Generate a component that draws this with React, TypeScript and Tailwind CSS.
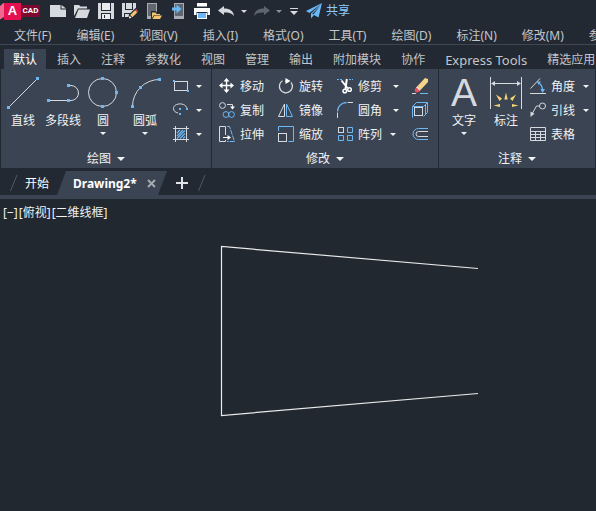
import type { ReactNode } from "react";

const LIGHT = "#d6d9dd";
const BLUE = "#6cb8f6";

function Caret({ large = false, className = "" }: { large?: boolean; className?: string }) {
  return (
    <svg viewBox="0 0 8 4" className={`${large ? "h-1 w-2" : "h-[3px] w-[6px]"} shrink-0 ${className}`} aria-hidden="true">
      <path d="M0 0h8L4 4z" fill="currentColor" />
    </svg>
  );
}

function Dot({ x, y, size = 3 }: { x: number; y: number; size?: number }) {
  return <rect x={x - size / 2} y={y - size / 2} width={size} height={size} fill={BLUE} stroke="none" />;
}

function Icon({ big = false, children }: { big?: boolean; children: ReactNode }) {
  return (
    <svg
      viewBox={big ? "0 0 32 32" : "0 0 16 16"}
      className={big ? "size-8 shrink-0" : "size-4 shrink-0"}
      fill="none"
      stroke={LIGHT}
      aria-hidden="true"
    >
      {children}
    </svg>
  );
}

const icons = {
  line: (
    <Icon big>
      <path d="M3 29 29 3" />
      <Dot x={1.5} y={30.5} />
      <Dot x={30.5} y={1.5} />
    </Icon>
  ),
  polyline: (
    <Icon big>
      <path d="M3 23.5h18M22 8.5h2a7.5 7.5 0 0 1 0 15h-2" />
      <Dot x={1.5} y={23.5} />
      <Dot x={21.5} y={23.5} />
      <Dot x={21.5} y={8.5} />
    </Icon>
  ),
  circle: (
    <Icon big>
      <circle cx="15.5" cy="15.5" r="14" />
      <Dot x={15.5} y={1.5} />
      <Dot x={29.5} y={15.5} />
      <Dot x={15.5} y={29.5} />
    </Icon>
  ),
  arc: (
    <Icon big>
      <path d="M3.5 29.5A27 27 0 0 1 30.5 2.5" />
      <Dot x={3.5} y={29.5} />
      <Dot x={11.5} y={10.5} />
      <Dot x={30.5} y={2.5} />
    </Icon>
  ),
  rect: (
    <Icon>
      <rect x="1.5" y="3.5" width="13" height="9" />
      <Dot x={1} y={3} size={2} />
      <Dot x={15} y={13} size={2} />
    </Icon>
  ),
  ellipse: (
    <Icon>
      <path d="M14 7C13.500 0 0.500 0.500 0.500 6.500c0 2.500 2 4 4.500 4.500" />
      <Dot x={7} y={7} size={2} />
      <Dot x={14} y={7} size={2} />
      <Dot x={7} y={12} size={2} />
    </Icon>
  ),
  hatch: (
    <Icon>
      <path d="M2.500 0v16M13.500 0v16M0 2.500h16M0 13.500h16" />
      <path d="m4 7 3-3M4 10l6-6M4 12.500l8-8M7 12.500l5-5M10 12.500l2-2" stroke={BLUE} strokeWidth="1.200" />
    </Icon>
  ),
  move: (
    <Icon>
      <path d="M7.500 2v11M2 7.500h11" stroke="#fff" strokeWidth="1.400" />
      <path d="M7.500 0 10.500 3.500h-6zM7.500 15l3-3.500h-6zM0 7.500l3.500-3v6zM15 7.500l-3.500-3v6z" fill="#fff" stroke="none" />
    </Icon>
  ),
  rotate: (
    <Icon>
      <path d="M4.500 2.800a6.500 6.500 0 1 0 8.500 1.500" strokeWidth="1.300" />
      <path d="M7 3h2" stroke="#fff" />
      <path d="M7.500 0 12.500 3 7.500 6z" fill="#fff" stroke="none" />
    </Icon>
  ),
  copy: (
    <Icon>
      <circle cx="3.500" cy="3.500" r="2.900" />
      <path d="M8 2.500h5.500V5" />
      <path d="M11 4.500h5L13.500 7.500z" fill="#fff" stroke="none" />
      <circle cx="7" cy="12.500" r="2.900" stroke={BLUE} />
      <circle cx="12.500" cy="12.500" r="2.900" stroke={BLUE} />
    </Icon>
  ),
  mirror: (
    <Icon>
      <path d="M6.500 2v12.500h-6z" />
      <path d="M8.500 2v12.500h6z" stroke={BLUE} />
    </Icon>
  ),
  stretch: (
    <Icon>
      <path d="M6.500 9V.5h-6v15h6V14" />
      <path d="M8 .5h2.500L15.500 15.500H8" stroke={BLUE} strokeDasharray="5 1" />
      <path d="M4 11.500h6" stroke="#fff" />
      <path d="M8.500 9 12 11.500 8.500 14z" fill="#fff" stroke="none" />
    </Icon>
  ),
  scale: (
    <Icon>
      <path d="M.5 5V.5h15v15h-5" stroke={BLUE} />
      <rect x=".5" y="7.500" width="8" height="8" />
    </Icon>
  ),
  trim: (
    <Icon>
      <path d="M0 1.500h5M12 1.500h4" stroke={BLUE} strokeDasharray="2 1" />
      <path d="m4.500 2.500 6 7.500M9.800 1 8.500 11" stroke="#fff" strokeWidth="2" />
      <circle cx="7.800" cy="13" r="1.800" stroke="#fff" strokeWidth="1.500" />
      <circle cx="12.500" cy="11.500" r="1.800" stroke="#fff" strokeWidth="1.500" />
    </Icon>
  ),
  fillet: (
    <Icon>
      <path d="M.5 9.500a9 9 0 0 1 9-9" stroke={BLUE} strokeWidth="1.300" />
      <path d="M.5 10.500V16M10.500 .5H16" />
    </Icon>
  ),
  array: (
    <Icon>
      <rect x="1.500" y="1.500" width="5" height="5" />
      <path d="M10.500 1.500h5v5h-5zM1.500 9.500h5v5h-5zM10.500 9.500h5v5h-5z" stroke={BLUE} />
    </Icon>
  ),
  erase: (
    <Icon>
      <path d="M0 15.500h4" />
      <path d="M8 15.500h8" stroke={BLUE} />
      <path d="M13 0 16 1v3L8.500 12 5 8.500z" fill="#f6d488" stroke="none" />
      <path d="m5 8.500 3.500 3.500-1 1L4 9.500z" fill="#fff" stroke="none" />
      <path d="m4.500 9.500 3.200 3.200C7 14.500 4 15 3 13.500c-.8-1.500 0-3 1.500-4z" fill="#e8505b" stroke="none" />
    </Icon>
  ),
  solid: (
    <Icon>
      <path d="m.5 4.500 4-4h11v10l-4 4M11.500 4.500l4-4M.5 4.500v11M13.500 3v10M.5 4.500h11" stroke={BLUE} />
      <rect x="2.500" y="5.500" width="8" height="8" />
    </Icon>
  ),
  offset: (
    <Icon>
      <path d="M16 2.500H6.500a5.500 5.500 0 0 0 0 11H16" stroke={BLUE} />
      <path d="M16 5.500H6.500a2.500 2.500 0 0 0 0 5H16" />
    </Icon>
  ),
  dimension: (
    <Icon big>
      <path d="M.5 0v32M31.500 0v32M2 6.500h28" />
      <path d="M1 6.500 5 4v5zM31 6.500 27 4v5z" fill={LIGHT} stroke="none" />
      <path
        d="M16 15.500l1.700 7h-3.400zM6 17.500l6 4-2.500 2.500zM26 17.500l-6 4 2.500 2.500zM3.500 28.500l6.500-1.500v3zM28.500 28.500 22 27v3z"
        fill="#f8d373"
        stroke="none"
      />
    </Icon>
  ),
  angle: (
    <Icon>
      <path d="M0 15.500h16M.5 10.500 10 .5" />
      <path d="M8 4.500c3 1.500 4.500 4.500 4.500 8" stroke={BLUE} strokeWidth="1.300" />
      <path d="M7 3.500h4L8.500 7zM10.500 11h4.500l-2.500 4z" fill={BLUE} stroke="none" />
    </Icon>
  ),
  leader: (
    <Icon>
      <circle cx="12.500" cy="4" r="3" />
      <path d="M9.500 4H6.500L2 12" />
      <path d="M.5 15V9.500l4 2.300z" fill={LIGHT} stroke="none" />
    </Icon>
  ),
  table: (
    <Icon>
      <path d="M.5 1.500h15v13H.5zM0 5.500h16M0 8.500h16M0 11.500h16M5.500 5v10M10.500 5v10" />
    </Icon>
  ),
};

function BigTool({ label, icon, menu = false, className = "w-10" }: { label: string; icon: ReactNode; menu?: boolean; className?: string }) {
  return (
    <button type="button" className={`flex h-[72px] flex-col items-center pt-[3px] ${className}`}>
      {icon}
      <span className="mt-1">{label}</span>
      {menu && <Caret className="mt-[3px]" />}
    </button>
  );
}

function Tool({ label, icon, menu = false }: { label: string; icon: ReactNode; menu?: boolean }) {
  return (
    <button type="button" className="flex h-6 items-center">
      {icon}
      <span className="ml-[5px] pt-0.5">{label}</span>
      {menu && <Caret className="ml-2" />}
    </button>
  );
}

function IconTool({ label, icon, menu = false }: { label: string; icon: ReactNode; menu?: boolean }) {
  return (
    <button type="button" aria-label={label} className="flex h-6 items-center gap-[7px]">
      {icon}
      {menu && <Caret />}
    </button>
  );
}

function Panel({ title, className, children }: { title: string; className: string; children: ReactNode }) {
  return (
    <section aria-label={title} className={`h-[99px] shrink-0 bg-[#3b4453] pt-[5px] ${className}`}>
      <div className="flex">{children}</div>
      <button type="button" className="flex h-[22px] w-full items-center justify-center gap-[6px] pt-[3px]">
        {title}
        <Caret large />
      </button>
    </section>
  );
}

const menus = ["文件(F)", "编辑(E)", "视图(V)", "插入(I)", "格式(O)", "工具(T)", "绘图(D)", "标注(N)", "修改(M)", "参数(P)"];
const tabs = ["默认", "插入", "注释", "参数化", "视图", "管理", "输出", "附加模块", "协作", "Express Tools", "精选应用"];

const quickTools = [
  {
    label: "新建",
    art: <path d="M0 2h10.500v4.500H16V14H0zM11.500 2 16 5.500h-4.500z" fill={LIGHT} stroke="none" />,
  },
  {
    label: "打开",
    art: <path d="M0 13V2h5l1.500 1.500H13V5.500H4zM4.500 6.500H16L13 15H1z" fill={LIGHT} stroke="none" />,
  },
  {
    label: "保存",
    art: (
      <g stroke="none">
        <path d="M0 0h16v16H0z" fill={LIGHT} />
        <path d="M3 0h1v7h8V0h1v8H3zM3 10h10v6h-1v-5H4v5H3z" fill="#222933" />
        <path d="M4 0h8v7H4zM4 11h8v5H4z" fill="#e8eaec" />
        <path d="M6 12h1v3H6z" fill="#222933" />
      </g>
    ),
  },
  {
    label: "另存为",
    art: (
      <g stroke="none">
        <path d="M0 0h14v9l-5 5H0z" fill={LIGHT} />
        <path d="M3 0h1v6h6V0h1v7H3zM2 10h7v1H3v3H2z" fill="#222933" />
        <path d="m6 16 1-4.500L13.500 5 17 8.500 10.500 15z" fill="#222933" />
        <path d="M8.200 12 13 7.200l2.200 2.200-4.800 4.800z" fill="#f5c56d" />
        <path d="m13 7.200 1.200-1.200L16 8.200l-.8 1.200z" fill="#e8505b" />
        <path d="m7.500 12.800 2 2L7 15.500z" fill="#fff" />
      </g>
    ),
  },
  {
    label: "从移动设备打开",
    art: (
      <g stroke="none">
        <path d="M1 0h10v16H1z" fill="#a9adb3" />
        <path d="M2 1h8v12H2z" fill="#62676f" />
        <path d="M5 8h5l1 1.500h5.500V16H5z" fill="#222933" />
        <path d="M6 9.500h3.500l1 1.500H14v1H8l-2 3z" fill="#f5c56d" />
        <path d="M8.500 12.500H16L14 16H6.500z" fill="#f5c56d" />
      </g>
    ),
  },
  {
    label: "保存到移动设备",
    art: (
      <g stroke="none">
        <path d="M4 0h10v16H4z" fill="#a9adb3" />
        <path d="M5 1h8v12H5z" fill="#62676f" />
        <path d="M2 4.500h4.500v-3L11.500 6l-5 4.500v-3H2z" fill={BLUE} />
      </g>
    ),
  },
  {
    label: "打印",
    art: (
      <g stroke="none">
        <path d="M3 0h10v3.500H3zM0 5h16v7h-2.500V9h-11v3H0z" fill="#fff" />
        <path d="M4 10h8v5H4z" fill={BLUE} />
        <path d="M3 10h1v6H3zM12 10h1v6h-1zM3 15h10v1H3z" fill="#fff" />
      </g>
    ),
  },
];

function Undo({ className = "" }: { className?: string }) {
  return (
    <svg viewBox="0 0 16 10" className={`h-[10px] w-4 ${className}`} aria-hidden="true">
      <path d="M0 4.500 6 0v2.500c6 0 9.500 2.500 10 7.500-2.500-3-5-3.500-10-3.500V9z" fill="currentColor" />
    </svg>
  );
}

export default function App() {
  return (
    <div className="flex min-h-screen flex-col overflow-hidden bg-[#222933] font-['Noto_Sans','Noto_Sans_CJK_SC',sans-serif] text-xs leading-4 whitespace-nowrap text-[#f0f2f4]">
      <header className="flex h-[22px] items-center">
        <div className="flex w-10 shrink-0 items-center">
          <div className="h-[17px] w-1 bg-[#f0688f] [clip-path:polygon(0_20%,100%_0,100%_85%,0_100%)]" />
          <div className="flex h-[17px] w-[17px] items-center justify-center bg-[#e51050] font-['Liberation_Sans',sans-serif] text-[13px] font-bold text-white">A</div>
          <div className="flex h-3 w-[19px] items-center justify-center bg-[#7d0a2e] font-['Roboto',sans-serif] text-[8px] font-bold text-white">CAD</div>
        </div>
        <div className="ml-[10px] flex gap-2">
          {quickTools.map((tool) => (
            <button key={tool.label} type="button" aria-label={tool.label}>
              <Icon>{tool.art}</Icon>
            </button>
          ))}
        </div>
        <button type="button" aria-label="放弃" className="ml-2 text-[#d6d9dd]">
          <Undo />
        </button>
        <button type="button" aria-label="放弃列表" className="ml-[7px] text-[#d6d9dd]">
          <Caret />
        </button>
        <button type="button" aria-label="重做" className="ml-[7px] text-[#5f656e]">
          <Undo className="-scale-x-100" />
        </button>
        <button type="button" aria-label="重做列表" className="ml-[6px] text-[#8c9198]">
          <Caret />
        </button>
        <button type="button" aria-label="自定义快速访问工具栏" className="ml-2 flex flex-col gap-0.5 text-[#d6d9dd]">
          <span className="h-px w-2 bg-current" />
          <Caret large />
        </button>
        <button type="button" className="ml-2 flex items-center gap-1 text-[#8ccbff]">
          <Icon>
            <path d="M16 0 0 8l3.500 2zM16 0 5 10.500v5L8 12l4.500 2.500zM6 11l8-8-6.500 8.200z" fill={BLUE} stroke="none" />
          </Icon>
          共享
        </button>
      </header>

      <nav aria-label="菜单栏" className="flex h-[23px] gap-[25px] overflow-hidden border-b border-[#3f4753] pt-[6px] pl-[14px] text-[#c3c6ca]">
        {menus.map((menu) => (
          <button key={menu} type="button" className="h-4 shrink-0">
            {menu}
          </button>
        ))}
      </nav>

      <nav aria-label="功能区选项卡" className="flex gap-0.5 overflow-hidden pt-1 pl-1 text-[#c3c6ca]">
        {tabs.map((tab, i) => (
          <button
            key={tab}
            type="button"
            aria-current={i === 0 ? "page" : undefined}
            className={`h-5 shrink-0 px-[9px] pt-0.5 ${i === 0 ? "bg-[#3b4453] text-white" : ""} ${tab === "Express Tools" ? "text-[13px] leading-4" : ""}`}
          >
            {tab}
          </button>
        ))}
      </nav>

      <main className="flex flex-1 flex-col">
        <div className="flex gap-px overflow-hidden pl-px">
          <Panel title="绘图" className="w-[210px] px-0.5">
            <BigTool label="直线" icon={icons.line} />
            <BigTool label="多段线" icon={icons.polyline} />
            <BigTool label="圆" icon={icons.circle} menu />
            <BigTool label="圆弧" icon={icons.arc} menu className="w-11" />
            <div className="ml-[6px]">
              <IconTool label="矩形" icon={icons.rect} menu />
              <IconTool label="椭圆" icon={icons.ellipse} menu />
              <IconTool label="图案填充" icon={icons.hatch} menu />
            </div>
          </Panel>
          <Panel title="修改" className="w-[226px]">
            <div className="ml-[7px]">
              <Tool label="移动" icon={icons.move} />
              <Tool label="复制" icon={icons.copy} />
              <Tool label="拉伸" icon={icons.stretch} />
            </div>
            <div className="ml-[14px]">
              <Tool label="旋转" icon={icons.rotate} />
              <Tool label="镜像" icon={icons.mirror} />
              <Tool label="缩放" icon={icons.scale} />
            </div>
            <div className="ml-[14px] w-[62px]">
              <div className="flex justify-between">
                <Tool label="修剪" icon={icons.trim} />
                <button type="button" aria-label="修剪列表"><Caret /></button>
              </div>
              <div className="flex justify-between">
                <Tool label="圆角" icon={icons.fillet} />
                <button type="button" aria-label="圆角列表"><Caret /></button>
              </div>
              <Tool label="阵列" icon={icons.array} menu />
            </div>
            <div className="ml-[13px]">
              <IconTool label="删除" icon={icons.erase} />
              <IconTool label="分解" icon={icons.solid} />
              <IconTool label="偏移" icon={icons.offset} />
            </div>
          </Panel>
          <Panel title="注释" className="w-[156px]">
            <BigTool
              label="文字"
              menu
              className="ml-[5px] w-10"
              icon={
                <span aria-hidden="true" className="h-8 font-['Liberation_Sans',sans-serif] text-[39px] leading-8 text-[#d6d9dd]">
                  A
                </span>
              }
            />
            <BigTool label="标注" icon={icons.dimension} className="ml-0.5 w-10" />
            <div className="ml-1">
              <Tool label="角度" icon={icons.angle} menu />
              <Tool label="引线" icon={icons.leader} menu />
              <Tool label="表格" icon={icons.table} />
            </div>
          </Panel>
        </div>

        <div className="flex h-[31px] items-center border-b-4 border-[#3b4453] pt-[3px] pl-[10px]">
          <svg viewBox="0 0 8 16" className="h-4 w-2" stroke="#4f5866" aria-hidden="true">
            <path d="M.5 16 7 0" />
          </svg>
          <button type="button" className="ml-[7px] pt-0.5 text-white">
            开始
          </button>
          <div className="ml-2 flex h-6 w-[110px] items-center bg-[#3b4453] pl-4 [clip-path:polygon(9px_0,100%_0,101px_100%,0_100%)]">
            <button type="button" aria-current="page" className="pt-0.5 font-bold text-white">
              Drawing2*
            </button>
            <button type="button" aria-label="关闭 Drawing2" className="ml-[10px]">
              <svg viewBox="0 0 9 9" className="size-[9px]" stroke="#a4a9b1" strokeWidth="2" aria-hidden="true">
                <path d="m1 1 7 7M8 1 1 8" />
              </svg>
            </button>
          </div>
          <button type="button" aria-label="新图形" className="ml-[9px]">
            <svg viewBox="0 0 12 12" className="size-3" stroke="#e2e4e7" strokeWidth="2" aria-hidden="true">
              <path d="M6 0v12M0 6h12" />
            </svg>
          </button>
          <svg viewBox="0 0 8 16" className="ml-[10px] h-4 w-2" stroke="#4f5866" aria-hidden="true">
            <path d="M.5 16 7 0" />
          </svg>
        </div>

        <section aria-label="图形区域" className="flex-1 bg-[#212830] pt-[6px]">
          <div className="flex gap-px pl-[3px]">
            <button type="button">[−]</button>
            <button type="button">[俯视]</button>
            <button type="button">[二维线框]</button>
          </div>
          <svg viewBox="0 0 260 174" className="mt-[23px] ml-[220px] h-[174px] w-[260px]" fill="none" stroke="#e9eaeb" aria-label="二维线框图形">
            <path d="M258 24.500 1.500 2.500V171.500L258 149.500" strokeWidth="1.200" />
          </svg>
        </section>
      </main>
    </div>
  );
}
